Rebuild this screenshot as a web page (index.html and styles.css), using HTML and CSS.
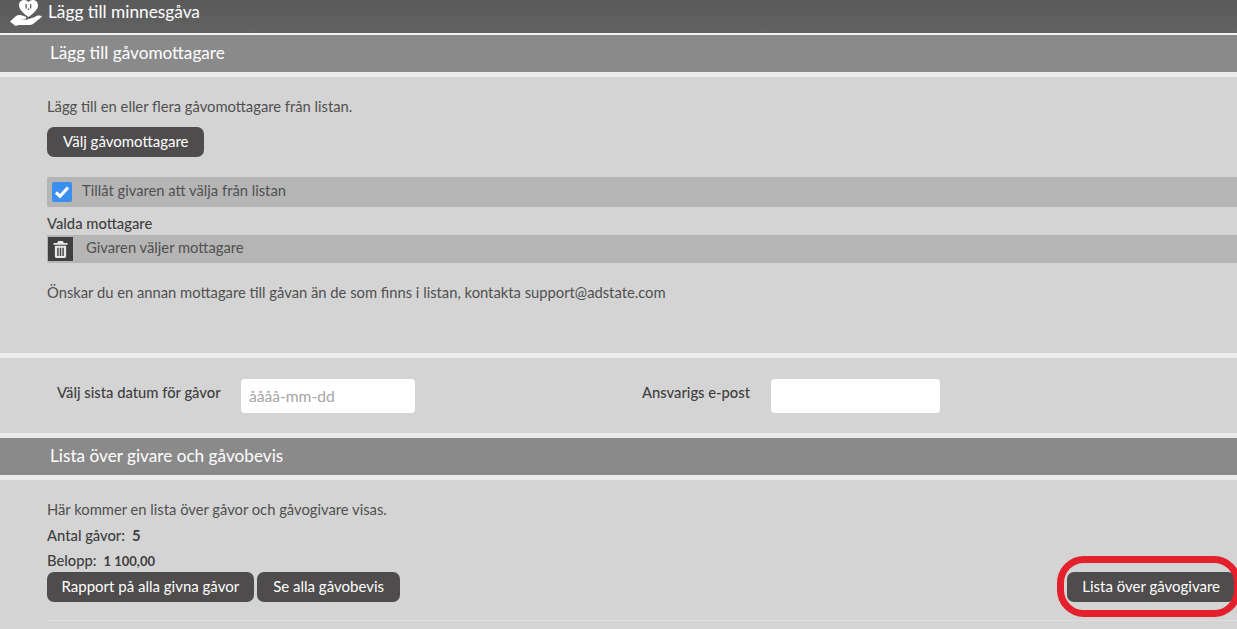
FILE: index.html
```html
<!DOCTYPE html>
<html lang="sv">
<head>
<meta charset="utf-8">
<title>Lägg till minnesgåva</title>
<link rel="stylesheet" href="styles.css">
</head>
<body>
<header class="top">
  <svg class="hand" viewBox="0 0 33 26" width="33" height="26" aria-hidden="true">
    <path fill="#fff" fill-rule="evenodd" d="M23 0c-2 0-3.500.9-4.500 2.300C17.500.9 16 0 14 0c-3 0-5 2.400-5 5.200C9 9.800 14 13.600 18.500 17 23 13.600 28 9.800 28 5.200 28 2.400 26 0 23 0z"/>
    <path fill="#5c5c5c" d="M15.500 4h1.300v4.500h-1.300zM20 4h1.300v4.500H20zM17.800 8.500h1.400V10h-1.400z"/>
    <path fill="#fff" d="M0 21.500l5.800-5.200c1.500-1.300 3.500-1.600 5.500-1l4 1.300c1.300.4 1.400 2.200-.2 2.400l-4 .2 5.500.6 6.900-2.300 3.500-1.700c1.500-.7 4-.2 5 .9l-8.700 7c-1.500 1-3 1.400-4.800 1.400H8.500l-3 .9z"/>
  </svg>
  <span>Lägg till minnesgåva</span>
</header>
<main class="page">
  <h2 class="bar">Lägg till gåvomottagare</h2>
  <section class="panel recipients">
    <p class="lead">Lägg till en eller flera gåvomottagare från listan.</p>
    <button class="btn pick" type="button">Välj gåvomottagare</button>
    <div class="row allow">
      <span class="check">
        <svg viewBox="0 0 20 20" width="20" height="20" aria-hidden="true">
          <rect width="20" height="20" rx="2" fill="#3a8fef"/>
          <path d="M4 10.500l4 3.800L16 5.500" fill="none" stroke="#fff" stroke-width="3.200"/>
        </svg>
      </span>
      <span>Tillåt givaren att välja från listan</span>
    </div>
    <div class="strong selected-label">Valda mottagare</div>
    <div class="row chosen">
      <span class="trash">
        <svg viewBox="0 0 16 18" width="15" height="17" aria-hidden="true">
          <path fill="#e8e8e8" d="M5.500 0h5l1 2H15.500v1.800H.5V2h4zM2 5h12v11.500c0 .8-.7 1.500-1.500 1.500h-9C2.700 18 2 17.300 2 16.500z"/>
          <path fill="#404040" d="M4.500 7h1.500v9H4.500zM7.250 7h1.500v9h-1.500zM10 7h1.500v9H10z"/>
        </svg>
      </span>
      <span>Givaren väljer mottagare</span>
    </div>
    <p class="note">Önskar du en annan mottagare till gåvan än de som finns i listan, kontakta support@adstate.com</p>
  </section>
  <section class="panel fields">
    <label class="strong date-label" for="last">Välj sista datum för gåvor</label>
    <input class="input date" id="last" type="text" placeholder="åååå-mm-dd">
    <label class="strong mail-label" for="mail">Ansvarigs e-post</label>
    <input class="input mail" id="mail" type="text">
  </section>
  <h2 class="bar">Lista över givare och gåvobevis</h2>
  <section class="panel list">
    <p class="lead">Här kommer en lista över gåvor och gåvogivare visas.</p>
    <div class="strong stat count">Antal gåvor:<span class="value">5</span></div>
    <div class="strong stat amount">Belopp:<span class="value small">1 100,00</span></div>
    <div class="actions">
      <button class="btn report" type="button">Rapport på alla givna gåvor</button>
      <button class="btn proofs" type="button">Se alla gåvobevis</button>
      <button class="btn last" type="button">Lista över gåvogivare</button>
    </div>
    <hr class="rule">
    <div class="ring"></div>
  </section>
</main>
</body>
</html>
```
FILE: styles.css
```css
* { box-sizing: border-box; }
html, body { margin: 0; height: 100%; overflow: hidden; }
body {
  width: 1237px;
  height: 629px;
  background: #d4d4d4;
  color: #505050;
  font-family: Lato, "Open Sans", sans-serif;
  font-size: 14.75px;
  line-height: 18px;
}
.top {
  height: 35px;
  padding: 0 0 2px 10px;
  display: flex;
  align-items: center;
  gap: 5px;
  color: #fff;
  font-size: 17.3px;
  background: linear-gradient(#5a5a5a, #626262);
  border-bottom: 2px solid #f2f2f2;
}
.hand { flex: none; margin-top: -6px; }
.top span { margin-top: -7px; }
.bar {
  margin: 0;
  height: 37px;
  padding: 0 0 0 50px;
  color: #fff;
  font-size: 17.2px;
  font-weight: 400;
  line-height: 36px;
  background: #8a8a8a;
}
.panel {
  background: #d4d4d4;
  border-top: 5px solid #ebebeb;
}
.recipients { height: 281px; padding: 20px 0 0 47px; }
.lead { margin: 0; }
.btn {
  height: 30px;
  padding: 0 15px 2px;
  border: 0;
  border-radius: 7px;
  background: #4e4c4c;
  color: #fff;
  font: inherit;
  font-size: 15px;
  white-space: nowrap;
}
.pick { display: block; margin-top: 12px; padding: 0 16px 2px; }
.report { padding: 0 14.5px 2px; }
.proofs { padding: 0 16.5px 2px; }
.row {
  display: flex;
  align-items: center;
  background: #b5b5b5;
}
.allow { height: 30px; margin-top: 20px; padding-bottom: 4px; }
.check { display: flex; margin: 4px 10px 0 5px; }
.strong { color: #3f3f3f; font-weight: 500; }
.selected-label { margin-top: 7px; }
.chosen { height: 28px; margin-top: 3px; padding-bottom: 4px; }
.trash {
  width: 25px;
  height: 24px;
  margin: 4px 13px 0 1px;
  background: #404040;
  display: flex;
  align-items: center;
  justify-content: center;
}
.note { margin: 20px 0 0; }
.fields {
  height: 85px;
  border-bottom: 5px solid #ebebeb;
  display: flex;
  align-items: flex-start;
  padding: 0 0 0 57px;
}
.date-label { width: 184px; margin-top: 25px; }
.mail-label { width: 129px; margin: 25px 0 0 0; }
.input {
  height: 34px;
  margin-top: 21px;
  padding: 0 8px;
  border: 0;
  border-radius: 4px;
  background: #fff;
  font: inherit;
  font-size: 15.6px;
}
.input::placeholder { color: #a5a5a5; opacity: 1; }
.date { width: 174px; margin-right: 227px; }
.mail { width: 169px; }
.list { position: relative; height: 154px; padding: 20px 0 0 47px; }
.stat { display: flex; align-items: baseline; gap: 7px; }
.count { margin-top: 8px; }
.amount { margin-top: 7px; }
.value { font-weight: 700; }
.small { font-size: 13px; }
.actions { display: flex; gap: 3px; margin-top: 2px; padding-right: 2px; }
.last { margin-left: auto; }
.rule { margin: 18px 0 0; border: 0; border-top: 1px solid #dfdfdf; }
.ring {
  position: absolute;
  left: 1057px;
  top: 76px;
  width: 184px;
  height: 61px;
  border: 7px solid #e3202c;
  border-radius: 27px;
}
```
